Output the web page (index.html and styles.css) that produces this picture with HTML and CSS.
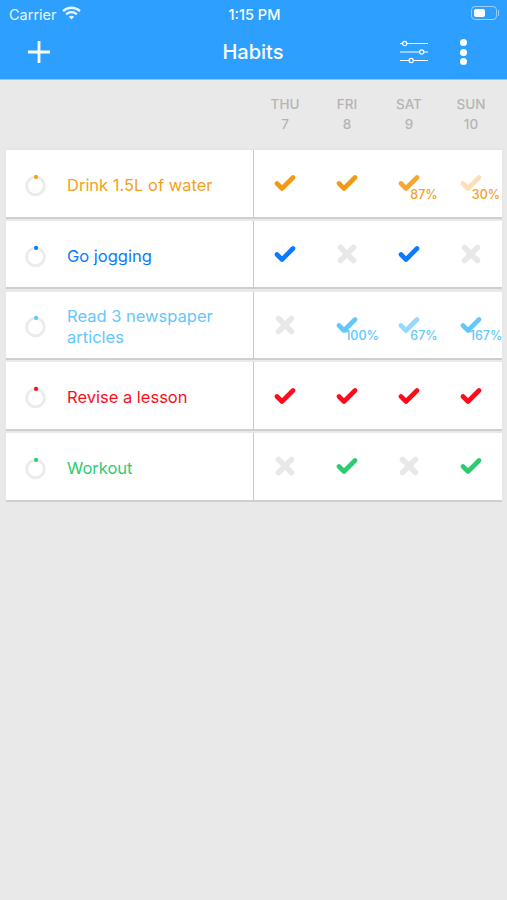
FILE: index.html
```html
<!DOCTYPE html>
<html lang="en">
<head>
    <meta charset="UTF-8">
    <meta name="viewport" content="width=device-width, initial-scale=1.0">
    <title>Habits</title>
    <link rel="stylesheet" href="styles.css">
</head>
<body>
    <svg class="defs" width="0" height="0">
        <symbol id="check" viewBox="0 0 22 18">
            <path d="M3 9.500l5 5L19 3.500" fill="none" stroke="currentColor" stroke-width="4.600" stroke-linecap="round" stroke-linejoin="round"/>
        </symbol>
        <symbol id="cross" viewBox="0 0 22 22">
            <path d="M4.500 4.500l13 13M17.500 4.500l-13 13" fill="none" stroke="currentColor" stroke-width="5.600" stroke-linecap="round"/>
        </symbol>
        <symbol id="ring" viewBox="0 0 24 24">
            <circle cx="12" cy="12.500" r="9.200" fill="none" stroke="#ebebeb" stroke-width="3"/>
            <circle cx="12.600" cy="3" r="2.200" fill="currentColor"/>
        </symbol>
    </svg>

    <header class="topbar">
        <div class="status">
            <div class="status-left">
                <span>Carrier</span>
                <svg class="wifi" width="19" height="14" viewBox="0 0 19 14">
                    <path d="M1 5.200C6 .6 13 .6 18 5.200" fill="none" stroke="#fff" stroke-width="2.300"/>
                    <path d="M4.100 8.300c3.200-2.800 7.600-2.800 10.800 0" fill="none" stroke="#fff" stroke-width="2.300"/>
                    <path d="M6.800 10.800c1.600-1.300 3.800-1.300 5.400 0L9.500 13.600z" fill="#fff"/>
                </svg>
            </div>
            <div class="status-time">1:15 PM</div>
            <div class="battery"><span class="battery-level"></span></div>
        </div>
        <nav class="navbar">
            <svg class="nav-add" width="24" height="24" viewBox="0 0 24 24">
                <path d="M12 1v22M1 12h22" fill="none" stroke="#fff" stroke-width="2.800"/>
            </svg>
            <h1 class="nav-title">Habits</h1>
            <div class="nav-actions">
                <svg width="30" height="24" viewBox="0 0 30 24">
                    <g fill="none" stroke="#fff" stroke-width="1.200">
                        <path d="M1 3.500h2.500M8 3.500h21M1 12h19M25 12h4M1 20.500h9M14.500 20.500h14.500"/>
                        <circle cx="5.700" cy="3.500" r="2.100"/>
                        <circle cx="22.700" cy="12" r="2.100"/>
                        <circle cx="12.200" cy="20.500" r="2.100"/>
                    </g>
                </svg>
                <div class="dots"><span></span><span></span><span></span></div>
            </div>
        </nav>
    </header>

    <div class="days">
        <div class="day">THU<br>7</div>
        <div class="day">FRI<br>8</div>
        <div class="day">SAT<br>9</div>
        <div class="day">SUN<br>10</div>
    </div>

    <main class="list">
        <div class="row orange">
            <div class="habit">
                <svg class="ring"><use href="#ring"/></svg>
                <div class="name">Drink 1.5L of water</div>
            </div>
            <div class="marks">
                <div class="mark"><svg class="check"><use href="#check"/></svg></div>
                <div class="mark"><svg class="check"><use href="#check"/></svg></div>
                <div class="mark"><svg class="check o87"><use href="#check"/></svg><span class="pct">87%</span></div>
                <div class="mark"><svg class="check o30"><use href="#check"/></svg><span class="pct">30%</span></div>
            </div>
        </div>

        <div class="row blue">
            <div class="habit">
                <svg class="ring"><use href="#ring"/></svg>
                <div class="name">Go jogging</div>
            </div>
            <div class="marks">
                <div class="mark"><svg class="check"><use href="#check"/></svg></div>
                <div class="mark"><svg class="cross"><use href="#cross"/></svg></div>
                <div class="mark"><svg class="check"><use href="#check"/></svg></div>
                <div class="mark"><svg class="cross"><use href="#cross"/></svg></div>
            </div>
        </div>

        <div class="row sky">
            <div class="habit">
                <svg class="ring"><use href="#ring"/></svg>
                <div class="name">Read 3 newspaper articles</div>
            </div>
            <div class="marks">
                <div class="mark"><svg class="cross"><use href="#cross"/></svg></div>
                <div class="mark"><svg class="check"><use href="#check"/></svg><span class="pct">100%</span></div>
                <div class="mark"><svg class="check o67"><use href="#check"/></svg><span class="pct">67%</span></div>
                <div class="mark"><svg class="check"><use href="#check"/></svg><span class="pct">167%</span></div>
            </div>
        </div>

        <div class="row red">
            <div class="habit">
                <svg class="ring"><use href="#ring"/></svg>
                <div class="name">Revise a lesson</div>
            </div>
            <div class="marks">
                <div class="mark"><svg class="check"><use href="#check"/></svg></div>
                <div class="mark"><svg class="check"><use href="#check"/></svg></div>
                <div class="mark"><svg class="check"><use href="#check"/></svg></div>
                <div class="mark"><svg class="check"><use href="#check"/></svg></div>
            </div>
        </div>

        <div class="row green">
            <div class="habit">
                <svg class="ring"><use href="#ring"/></svg>
                <div class="name">Workout</div>
            </div>
            <div class="marks">
                <div class="mark"><svg class="cross"><use href="#cross"/></svg></div>
                <div class="mark"><svg class="check"><use href="#check"/></svg></div>
                <div class="mark"><svg class="cross"><use href="#cross"/></svg></div>
                <div class="mark"><svg class="check"><use href="#check"/></svg></div>
            </div>
        </div>
    </main>
</body>
</html>
```

FILE: styles.css
```css
body {
    font-family: Inter, "Liberation Sans", sans-serif;
    background-color: #e9e9e9;
    margin: 0;
    padding: 0;
    height: 900px;
    overflow: hidden;
}

.defs {
    position: absolute;
}

.topbar {
    background-color: #2c9fff;
    color: #fff;
    height: 79px;
    border-bottom: 1px solid #8cc8f5;
}

.status {
    display: grid;
    grid-template-columns: 1fr auto 1fr;
    align-items: center;
    height: 28px;
    padding: 0 7px 0 9px;
    font-size: 14.500px;
}

.status-left {
    display: flex;
    align-items: center;
    gap: 5px;
    opacity: 0.9;
}

.wifi {
    margin-top: -3px;
}

.status-time {
    font-weight: 500;
}

.battery {
    position: relative;
    justify-self: end;
    width: 26px;
    height: 14px;
    border: 1px solid rgba(255, 255, 255, 0.5);
    border-radius: 4px;
    padding: 2px;
    box-sizing: border-box;
    margin-right: 3px;
    margin-top: -2px;
}

.battery::after {
    content: "";
    position: absolute;
    right: -3px;
    top: 3px;
    width: 1.500px;
    height: 6px;
    background-color: rgba(255, 255, 255, 0.5);
}

.battery-level {
    display: block;
    width: 11px;
    height: 100%;
    background-color: #fff;
    border-radius: 2px;
}

.navbar {
    display: grid;
    grid-template-columns: 1fr auto 1fr;
    align-items: center;
    height: 48px;
    padding: 0 40px 0 27px;
}

.nav-title {
    margin: 0;
    font-size: 20px;
    font-weight: 500;
    transform: translateX(6px);
}

.nav-actions {
    justify-self: end;
    display: flex;
    align-items: center;
    gap: 31px;
}

.dots {
    display: flex;
    flex-direction: column;
    gap: 2.500px;
}

.dots span {
    width: 7px;
    height: 7px;
    border-radius: 50%;
    background-color: #fff;
}

.days {
    display: grid;
    grid-template-columns: repeat(4, 62px);
    justify-content: end;
    height: 70px;
    padding: 14px 5px 0 0;
    box-sizing: border-box;
}

.day {
    text-align: center;
    font-size: 13.500px;
    line-height: 20px;
    font-weight: 500;
    color: #b4b4b4;
}

.list {
    margin: 0 5px 0 6px;
    box-shadow: 0 -1px 3px rgba(0, 0, 0, 0.04);
}

.row {
    display: grid;
    grid-template-columns: 248px 1fr;
    height: 68.500px;
    margin-bottom: 2.250px;
    background-color: #fff;
    border-bottom: 2px solid #cfcfcf;
    box-sizing: border-box;
}

.habit {
    display: flex;
    align-items: center;
    gap: 20px;
    padding: 4px 30px 0 18px;
    border-right: 1px solid #c9c9c9;
}

.ring {
    width: 23px;
    height: 23px;
    flex: none;
}

.name {
    font-size: 16.500px;
    line-height: 20.500px;
}

.marks {
    display: grid;
    grid-template-columns: repeat(4, 62px);
}

.mark {
    position: relative;
    display: flex;
    align-items: center;
    justify-content: center;
}

.check {
    width: 22px;
    height: 18px;
}

.cross {
    width: 22px;
    height: 22px;
    color: #e8e8e8;
}

.o87 {
    opacity: 0.87;
}

.o67 {
    opacity: 0.67;
}

.o30 {
    opacity: 0.3;
}

.pct {
    position: absolute;
    left: calc(50% + 15px);
    top: 36.500px;
    transform: translateX(-50%);
    font-size: 12.500px;
    line-height: 16px;
    font-weight: 500;
    white-space: nowrap;
}

.orange {
    color: #f5a11c;
}

.orange .check {
    color: #f39a14;
}

.blue {
    color: #0a7aff;
}

.sky {
    color: #63c7fb;
}

.red {
    color: #fc0d1b;
}

.green {
    color: #2ecc71;
}
```
